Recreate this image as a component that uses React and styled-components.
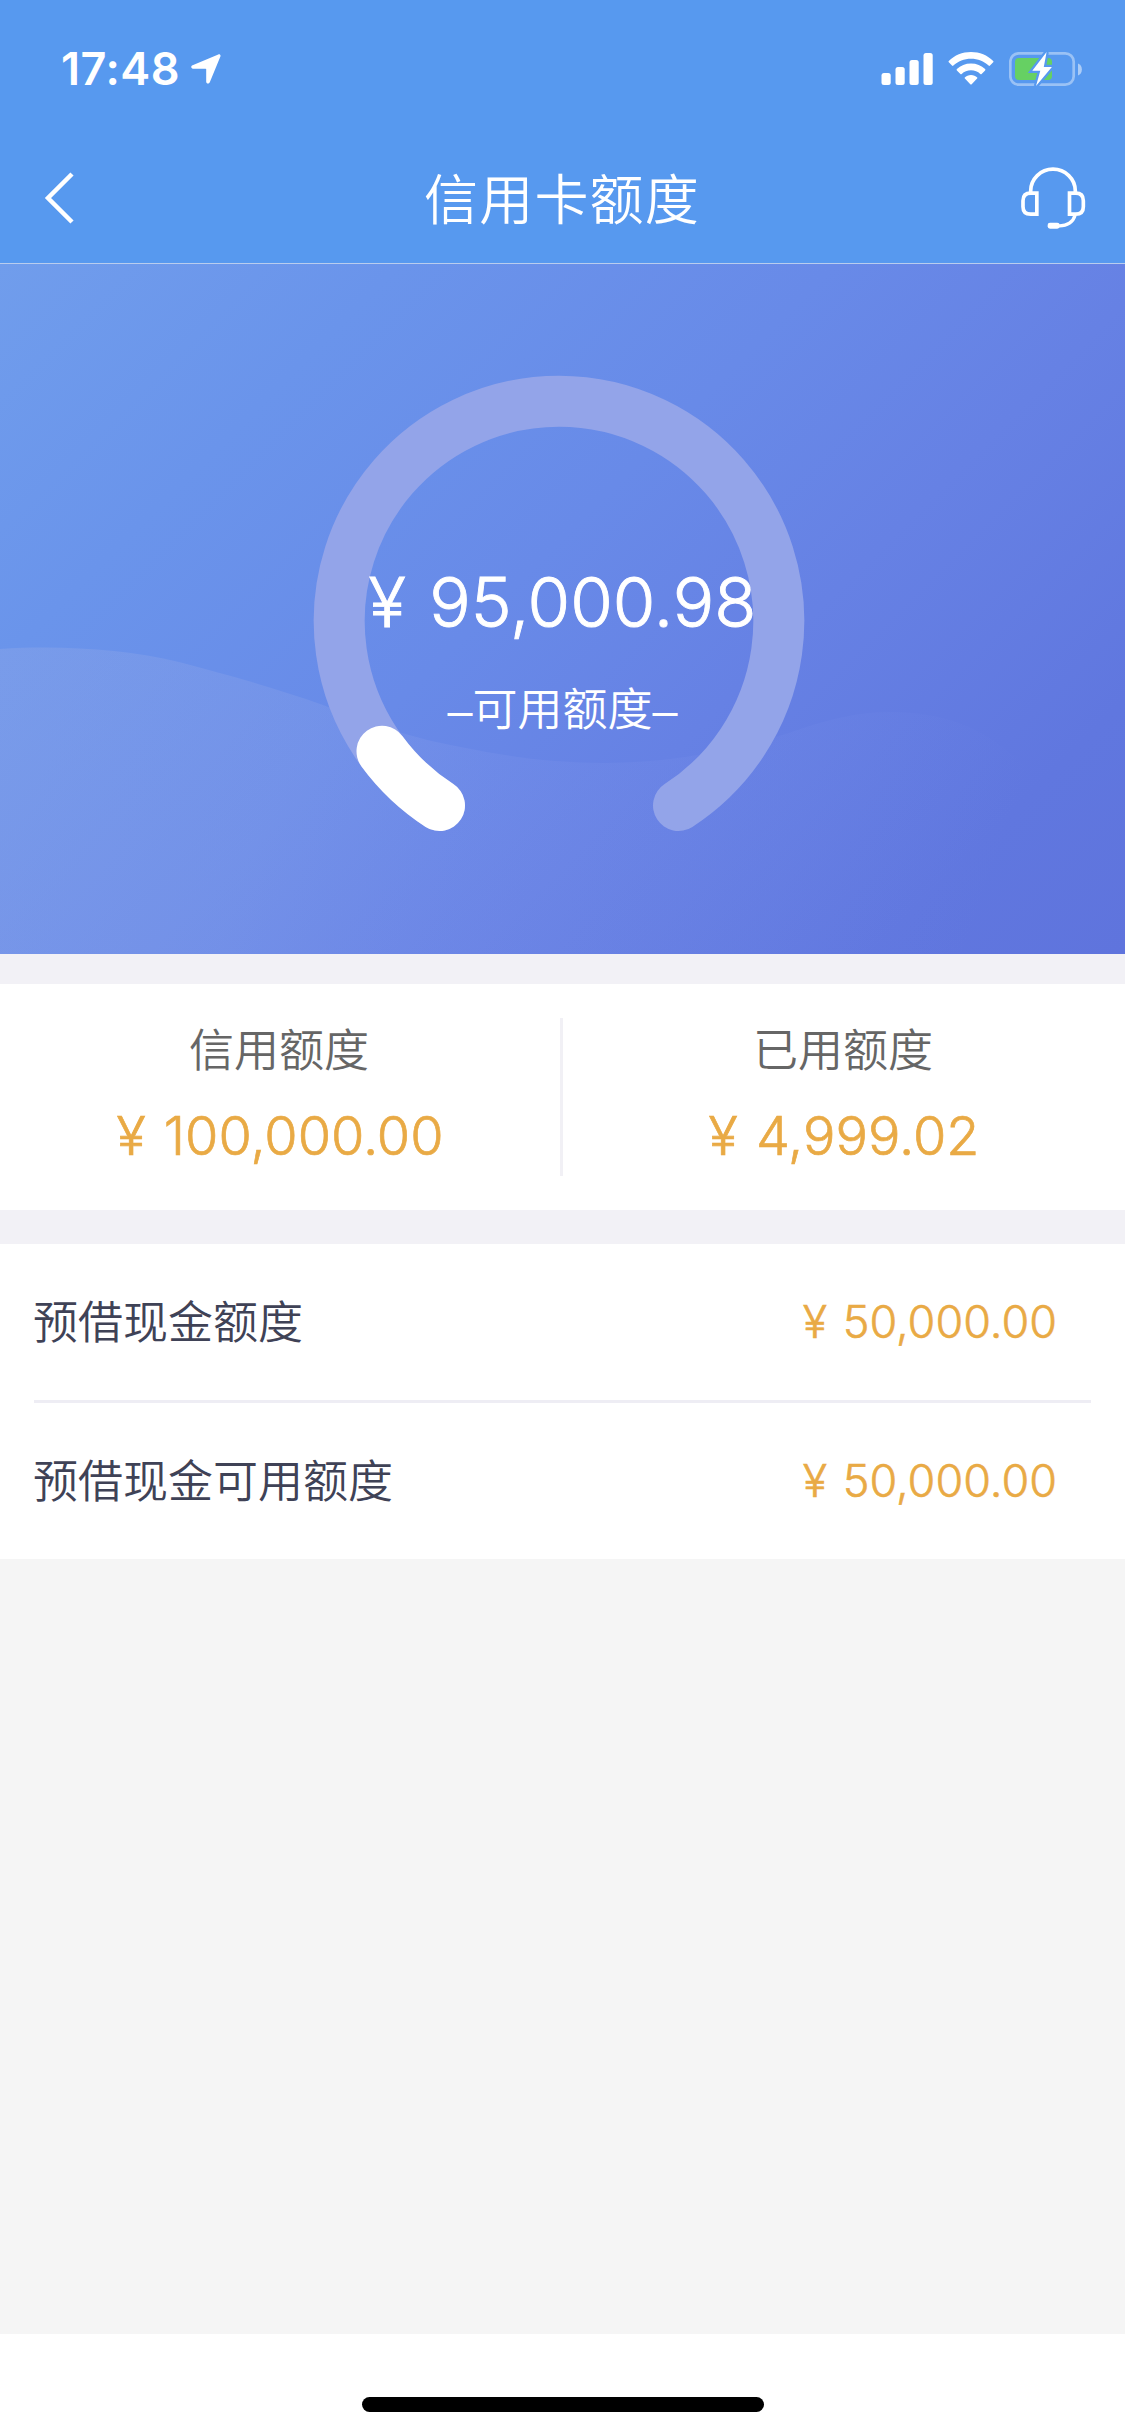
import React from "react";
import styled, { createGlobalStyle } from "styled-components";

const CJK = `"Noto Sans CJK SC", sans-serif`;

const GlobalStyle = createGlobalStyle`
  *, *::before, *::after { box-sizing: border-box; }
  body { margin: 0; background: #fff; font-family: Inter, ${CJK}; }
`;

const Screen = styled.div`
  width: 1125px;
  height: 2436px;
  display: flex;
  flex-direction: column;
  background: #f5f5f5;
  overflow: hidden;
`;

const TopBar = styled.header`
  flex: none;
  height: 264px;
  background: #5799ef;
  border-bottom: 1px solid #b9cdee;
  color: #fff;
`;

const StatusBar = styled.div`
  height: 132px;
  padding: 6px 43px 0 61px;
  display: flex;
  align-items: center;
  justify-content: space-between;
`;

const StatusGroup = styled.div`
  display: flex;
  align-items: center;
  gap: ${(p) => p.$gap}px;
`;

const Clock = styled.span`
  font: 600 45px/54px Inter, sans-serif;
  letter-spacing: 0.5px;
`;

const NavBar = styled.nav`
  height: 131px;
  padding: 0 39px 0 44px;
  display: grid;
  grid-template-columns: 66px 1fr 66px;
  align-items: center;
`;

const Title = styled.h1`
  margin: 0;
  padding: 0 6px 2px 0;
  text-align: center;
  font: 350 54px/80px ${CJK};
  letter-spacing: 1.2px;
`;

const Icon = styled.svg`
  display: block;
  flex: none;
`;

const Hero = styled.section`
  position: relative;
  flex: none;
  height: 690px;
  display: flex;
  justify-content: center;
  padding: 107px 7px 0 0;
  background: linear-gradient(135deg, #709dec 0%, #6a94eb 22%, #688ae8 46%, #6681e4 64%, #6077df 86%, #5f74dd 100%);
`;

const Wave = styled.svg`
  position: absolute;
  left: 0;
  bottom: 0;
`;

const Gauge = styled.div`
  position: relative;
  display: grid;
  width: 500px;
  height: 500px;
  > * { grid-area: 1 / 1; }
`;

const Reading = styled.div`
  display: flex;
  flex-direction: column;
  align-items: center;
  padding: 189px 0 0 7px;
  color: #fff;
`;

const Balance = styled.div`
  font-size: 69px;
  line-height: 84px;
  font-weight: 300;
  word-spacing: 4px;
  -webkit-text-stroke: 0.9px currentColor;
  white-space: nowrap;
`;

const BalanceLabel = styled.div`
  margin-top: 34px;
  font: 350 45px/66px "Liberation Sans", ${CJK};
  white-space: nowrap;
`;

const Gap = styled.div`
  flex: none;
  height: ${(p) => p.$size}px;
  background: #f2f1f6;
`;

const Summary = styled.section`
  flex: none;
  height: 226px;
  background: #fff;
  display: grid;
  grid-template-columns: 560px 3px 562px;
  padding: 34px 0;
`;

const Divider = styled.div`
  background: #f1f0f5;
`;

const Stat = styled.div`
  display: flex;
  flex-direction: column;
  align-items: center;
`;

const StatLabel = styled.div`
  color: #666;
  font: 350 45px/66px ${CJK};
  margin: -3px 2px 0 0;
`;

const Money = styled.div`
  color: #e9aa45;
  font-weight: 300;
  font-size: ${(p) => p.$size}px;
  line-height: 66px;
  margin-top: ${(p) => p.$top || 0}px;
  word-spacing: 3px;
  -webkit-text-stroke: 0.013em currentColor;
  white-space: nowrap;
`;

const List = styled.section`
  flex: none;
  background: #fff;
  padding: 0 34px;
`;

const Row = styled.div`
  height: ${(p) => (p.$last ? 156 : 159)}px;
  border-bottom: ${(p) => (p.$last ? "none" : "3px solid #eeedf4")};
  padding-right: 34px;
  display: flex;
  align-items: center;
  justify-content: space-between;
`;

const RowLabel = styled.div`
  color: #3f4256;
  font: 350 45px/66px ${CJK};
  padding-bottom: 5px;
  margin-left: -1px;
`;

const HomeArea = styled.footer`
  flex: none;
  height: 102px;
  margin-top: auto;
  padding-top: 63px;
  background: #fff;
`;

const HomeIndicator = styled.div`
  width: 402px;
  height: 15px;
  margin: 0 auto;
  border-radius: 8px;
  background: #000;
`;

const rows = [
  { label: "预借现金额度", value: "¥ 50,000.00" },
  { label: "预借现金可用额度", value: "¥ 50,000.00" },
];

export default function App() {
  return (
    <Screen>
      <GlobalStyle />
      <TopBar>
        <StatusBar>
          <StatusGroup $gap={11}>
            <Clock>17:48</Clock>
            <Icon width="30" height="30" viewBox="0 0 30 30" fill="#fff">
              <path d="M27.3 0.4 1.6 11.2C-0.4 12-.2 14.7 2 14.7H14.6Q15.2 14.7 15.2 15.3V27.8C15.2 30 18 30.2 18.8 28.3L29.4 2.6C30 1.1 28.8-.2 27.3.4Z" />
            </Icon>
          </StatusGroup>
          <StatusGroup $gap={15}>
            <Icon width="52" height="34" viewBox="0 0 52 34" fill="#fff">
              <rect x="0.5" y="21" width="9.2" height="12" rx="2.5" />
              <rect x="14.5" y="15" width="9.2" height="18" rx="2.5" />
              <rect x="28.5" y="8" width="9.2" height="25" rx="2.5" />
              <rect x="42.5" y="1" width="9.2" height="32" rx="2.5" />
            </Icon>
            <Icon width="46" height="34" viewBox="0 0 46 34" fill="#fff">
              <path d="M23 0C31.6 0 39.500 3.300 45.200 8.900Q45.900 9.600 45.200 10.300L42 13.600Q41.300 14.200 40.600 13.600C36 9.200 29.800 6.700 23 6.700S10 9.200 5.400 13.600Q4.700 14.200 4 13.600L.8 10.300Q.1 9.600.8 8.900C6.500 3.300 14.400 0 23 0Z" />
              <path d="M23 11.500C28.500 11.500 33.400 13.500 37.100 17Q37.800 17.700 37.100 18.400L33.600 21.900Q33 22.500 32.300 21.900C29.800 19.700 26.600 18.300 23 18.300S16.200 19.700 13.700 21.900Q13 22.500 12.400 21.900L8.900 18.400Q8.200 17.700 8.900 17C12.600 13.500 17.500 11.500 23 11.500Z" />
              <path d="M23 23C25.500 23 27.700 23.900 29.200 25.400Q29.700 26 29.100 26.600L23.700 32.200Q23 32.900 22.300 32.200L16.900 26.600Q16.300 26 16.800 25.400C18.300 23.900 20.500 23 23 23Z" />
            </Icon>
            <Icon width="73" height="36" viewBox="0 0 73 36">
              <rect x="1.300" y="2.300" width="63.400" height="31.400" rx="8.500" fill="none" stroke="#fff" strokeOpacity=".4" strokeWidth="2.700" />
              <path d="M69 12.500c5.200 1.700 5.200 10.300 0 12Z" fill="#fff" fillOpacity=".5" />
              <rect x="6" y="7" width="37" height="22" rx="4" fill="#66d063" />
              <path d="M37.600 1 23.300 19.800H31.300L27 35 42.900 15.900H34.800Z" fill="#fff" stroke="#5799ef" strokeWidth="4.500" paintOrder="stroke" />
            </Icon>
          </StatusGroup>
        </StatusBar>
        <NavBar>
          <Icon width="32" height="54" viewBox="0 0 32 54" fill="none" stroke="#fff" strokeWidth="4.500">
            <path d="M28 3 4 27 28 51" />
          </Icon>
          <Title>信用卡额度</Title>
          <Icon width="66" height="64" viewBox="480 439 198 192" fill="none" stroke="#fff" strokeWidth="11">
            <path d="M512 517V514C512 478 542 448.500 579 448.500S646 478 646 514V517" />
            <path d="M530.500 520.500H512Q489 520.500 489 543V561Q489 583.500 512 583.500H530.500Z" />
            <path d="M628.500 520.500H647Q670 520.500 670 543V561Q670 583.500 647 583.500H628.500Z" />
            <path d="M645 587C640 606 622 619.500 596 618.500" strokeWidth="10" />
            <rect x="563" y="609" width="36" height="18" rx="7" fill="#fff" stroke="none" />
          </Icon>
        </NavBar>
      </TopBar>

      <Hero>
        <Wave width="1125" height="320" viewBox="0 0 1125 320">
          <defs>
            <linearGradient id="waveFill" x1="0" y1="0" x2="1" y2="0.1">
              <stop offset="0" stopColor="#a8b4e6" stopOpacity=".24" />
              <stop offset=".3" stopColor="#a0b0ea" stopOpacity=".2" />
              <stop offset=".5" stopColor="#94a4f0" stopOpacity=".14" />
              <stop offset=".8" stopColor="#8498ee" stopOpacity=".09" />
              <stop offset="1" stopColor="#8498ee" stopOpacity="0" />
            </linearGradient>
          </defs>
          <path
            d="M0 15C60 11 125 15 179 28C225 40 275 54 323 71C375 91 410 104 466 114C510 123 555 129 605 129C665 129 725 119 789 99C825 86 855 78 890 78C960 78 1010 105 1050 165C1065 210 1065 260 1065 320H0Z"
            fill="url(#waveFill)"
          />
        </Wave>
        <Gauge>
          <Icon width="500" height="500" viewBox="-250 -250 500 500" fill="none" strokeWidth="51" strokeLinecap="round">
            <path d="M-119.500 184.500A219.800 219.800 0 1 1 119.500 184.500" stroke="#93a4e9" />
            <path d="M-119.500 184.500A219.800 219.800 0 0 1 -177 130.300" stroke="#fff" />
          </Icon>
          <Reading>
            <Balance>¥ 95,000.98</Balance>
            <BalanceLabel>–可用额度–</BalanceLabel>
          </Reading>
        </Gauge>
      </Hero>

      <Gap $size={30} />

      <Summary>
        <Stat>
          <StatLabel>信用额度</StatLabel>
          <Money $size={54} $top={22}>¥ 100,000.00</Money>
        </Stat>
        <Divider />
        <Stat>
          <StatLabel>已用额度</StatLabel>
          <Money $size={54} $top={22}>¥ 4,999.02</Money>
        </Stat>
      </Summary>

      <Gap $size={34} />

      <List>
        {rows.map((row, i) => (
          <Row key={row.label} $last={i === rows.length - 1}>
            <RowLabel>{row.label}</RowLabel>
            <Money $size={45}>{row.value}</Money>
          </Row>
        ))}
      </List>

      <HomeArea>
        <HomeIndicator />
      </HomeArea>
    </Screen>
  );
}
